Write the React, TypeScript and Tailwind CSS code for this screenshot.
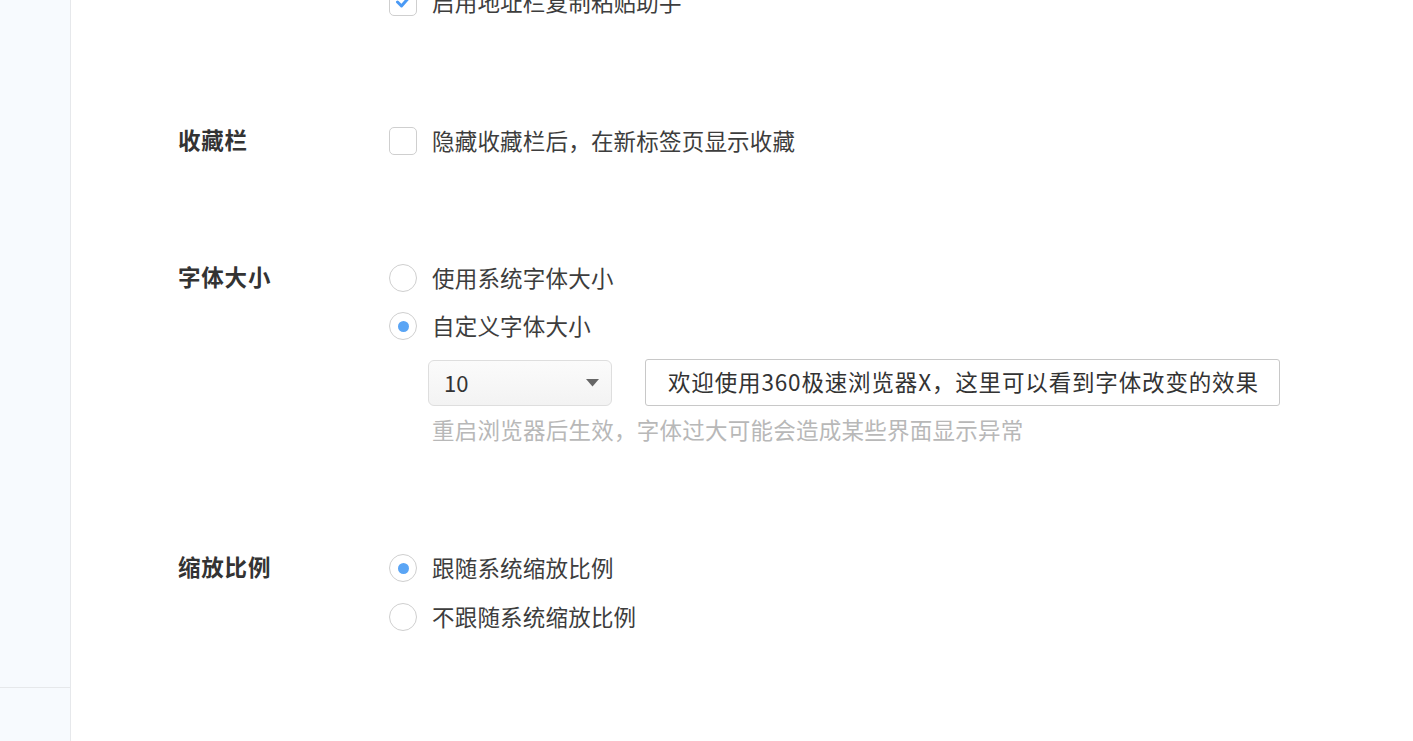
import type { ReactNode } from "react";

const font = {
  fontFamily: '"Microsoft YaHei", "Noto Sans CJK SC", "Noto Sans", sans-serif',
};

function Checkbox({ checked = false }: { checked?: boolean }) {
  return (
    <span className="flex h-[28px] w-[28px] shrink-0 items-center justify-center rounded-[5px] border border-[#cfcfcf] bg-white">
      {checked && (
        <svg width="16" height="14" viewBox="0 0 16 14">
          <path
            d="M2.5 7 L6.5 11 L13.5 3"
            fill="none"
            stroke="#4a9af5"
            strokeWidth="3"
            strokeLinecap="round"
            strokeLinejoin="round"
          />
        </svg>
      )}
    </span>
  );
}

function Radio({ checked = false }: { checked?: boolean }) {
  return (
    <span className="flex h-[28px] w-[28px] shrink-0 items-center justify-center rounded-full border border-[#cfcfcf] bg-white">
      {checked && <span className="h-[11px] w-[11px] rounded-full bg-[#5aa5f5]" />}
    </span>
  );
}

function Option({ control, children }: { control: ReactNode; children: ReactNode }) {
  return (
    <div className="flex h-[28px] items-center gap-[15px]">
      {control}
      <span className="-mt-[3px] text-[22.5px] leading-[28px] tracking-[0.2px] whitespace-nowrap text-[#3d3d3d]">
        {children}
      </span>
    </div>
  );
}

function Section({
  label,
  children,
  className = "",
}: {
  label?: string;
  children: ReactNode;
  className?: string;
}) {
  return (
    <div className={`flex ${className}`}>
      <div className="-mt-[1px] flex h-[28px] w-[211px] shrink-0 items-center text-[22.5px] font-bold tracking-[0.8px] text-[#333]">
        {label}
      </div>
      <div className="flex flex-col">{children}</div>
    </div>
  );
}

export default function App() {
  return (
    <div className="flex h-[741px] w-full overflow-hidden bg-white" style={font}>
      <aside className="flex w-[71px] shrink-0 flex-col border-r border-[#e6e8eb] bg-[#f7fafe]">
        <div className="h-[688px] border-b border-[#e6e8eb]" />
      </aside>

      <main className="flex flex-1 flex-col pl-[107px]">
        <Section className="-mt-[12px]">
          <Option control={<Checkbox checked />}>启用地址栏复制粘贴助手</Option>
        </Section>

        <Section label="收藏栏" className="mt-[111px]">
          <Option control={<Checkbox />}>隐藏收藏栏后，在新标签页显示收藏</Option>
        </Section>

        <Section label="字体大小" className="mt-[109px]">
          <div className="flex flex-col gap-[20px]">
            <Option control={<Radio />}>使用系统字体大小</Option>
            <Option control={<Radio checked />}>自定义字体大小</Option>
          </div>
          <div className="mt-[19px] flex items-center gap-[33px] pl-[39px]">
            <div className="flex h-[46px] w-[184px] items-center justify-between rounded-[6px] border border-[#dedede] bg-gradient-to-b from-[#fbfbfb] to-[#f3f3f3] pr-[12px] pl-[15px]">
              <span className="text-[22px] text-[#333]">10</span>
              <svg width="13" height="8" viewBox="0 0 13 8">
                <path d="M0 0 H13 L6.5 7.5 Z" fill="#666" />
              </svg>
            </div>
            <div className="flex h-[47px] w-[635px] items-center rounded-[3px] border border-[#c8c8c8] bg-white px-[22px]">
              <span className="-mt-[2px] text-[22.5px] tracking-[0.85px] whitespace-nowrap text-[#333]">
                欢迎使用360极速浏览器X，这里可以看到字体改变的效果
              </span>
            </div>
          </div>
          <p className="mt-[9px] pl-[43px] text-[22.5px] leading-[28px] tracking-[0.25px] whitespace-nowrap text-[#b8b8b8]">
            重启浏览器后生效，字体过大可能会造成某些界面显示异常
          </p>
        </Section>

        <Section label="缩放比例" className="mt-[111px]">
          <div className="flex flex-col gap-[21px]">
            <Option control={<Radio checked />}>跟随系统缩放比例</Option>
            <Option control={<Radio />}>不跟随系统缩放比例</Option>
          </div>
        </Section>
      </main>
    </div>
  );
}
